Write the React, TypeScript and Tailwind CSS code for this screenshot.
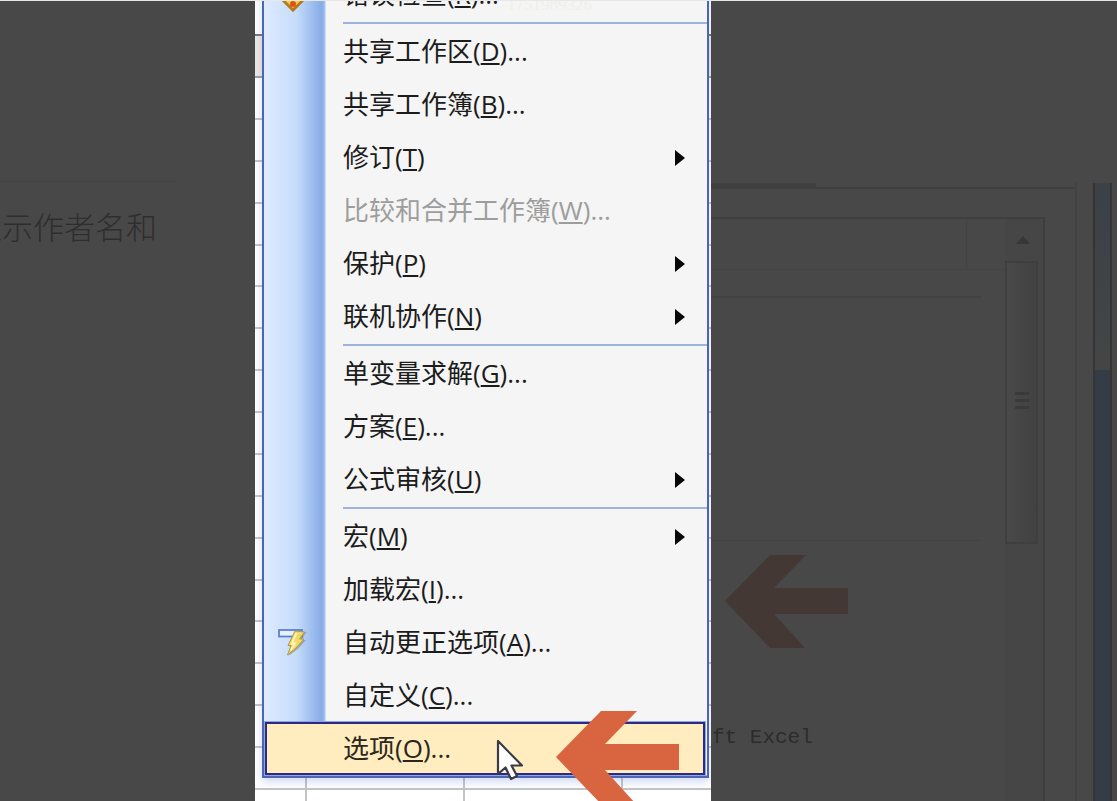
import React from "react";

type Item = {
  label: string;
  hotkey: string;
  ellipsis?: boolean;
  submenu?: boolean;
  disabled?: boolean;
  selected?: boolean;
  icon?: React.ReactNode;
  note?: string;
};

function ShieldIcon() {
  return (
    <svg width="30" height="34" viewBox="0 0 30 34" aria-hidden="true">
      <path d="M15 1 L28 15 V20 L15 33 L2 20 V15 Z" fill="#f4d13c" stroke="#b8860b" strokeWidth="1.5" />
      <path d="M3 20 L15 32 L27 20" fill="none" stroke="#b5791c" strokeWidth="2.500" />
      <path d="M13 5 H17 L16.5 21 H13.5 Z" fill="#d8361d" />
      <circle cx="15" cy="26" r="3" fill="#e0501c" />
    </svg>
  );
}

function AutoCorrectIcon() {
  return (
    <svg width="30" height="30" viewBox="0 0 30 30" aria-hidden="true">
      <rect x="1" y="2" width="23" height="6.5" fill="#e6f0ff" stroke="#5a80d4" strokeWidth="1.8" />
      <path d="M18 4 L28.500 4 L23.500 12 H28 L20 21 L10.500 28 L14.500 18.500 H11 Z" fill="#8a7a5a" opacity=".5" />
      <path d="M17 3 L26.500 4 L21.500 11 H26 L18 20 L9.500 27 L13 17.500 H10 Z" fill="#f3da62" stroke="#b09a4a" strokeWidth="1" />
      <path d="M18.500 5 L14 15.500 H17 L13 22" fill="none" stroke="#fff8c0" strokeWidth="1.8" />
    </svg>
  );
}

function ArrowShape({ className }: { className: string }) {
  return (
    <svg width="124" height="93" viewBox="0 0 124 93" className={className} aria-hidden="true">
      <path d="M0 46 L45 0 H81 L49 33 H123 V59 H49 L80 93 H45 Z" fill="currentColor" />
    </svg>
  );
}

const groups: Item[][] = [
  [{ label: "错误检查", hotkey: "R", ellipsis: true, icon: <ShieldIcon />, note: "1751989326" }],
  [
    { label: "共享工作区", hotkey: "D", ellipsis: true },
    { label: "共享工作簿", hotkey: "B", ellipsis: true },
    { label: "修订", hotkey: "T", submenu: true },
    { label: "比较和合并工作簿", hotkey: "W", ellipsis: true, disabled: true },
    { label: "保护", hotkey: "P", submenu: true },
    { label: "联机协作", hotkey: "N", submenu: true },
  ],
  [
    { label: "单变量求解", hotkey: "G", ellipsis: true },
    { label: "方案", hotkey: "E", ellipsis: true },
    { label: "公式审核", hotkey: "U", submenu: true },
  ],
  [
    { label: "宏", hotkey: "M", submenu: true },
    { label: "加载宏", hotkey: "I", ellipsis: true },
    { label: "自动更正选项", hotkey: "A", ellipsis: true, icon: <AutoCorrectIcon /> },
    { label: "自定义", hotkey: "C", ellipsis: true },
    { label: "选项", hotkey: "O", ellipsis: true, selected: true },
  ],
];

function MenuRow({ item }: { item: Item }) {
  return (
    <li className="relative h-[53px]">
      <button
        type="button"
        disabled={item.disabled}
        className={
          "flex h-full w-full items-center whitespace-nowrap pr-[18px] text-left text-[26px] leading-8 " +
          (item.selected
            ? "border-2 border-[#2d2a86] bg-[#ffecbf] text-[#2b2620] outline-1 outline-[#8ea6e2]"
            : item.disabled
              ? "border-x-2 border-transparent text-[#9d9d9d]"
              : "border-x-2 border-transparent text-[#1c1c1c]")
        }
      >
        <span className="flex w-[76px] shrink-0 pl-[11px]">{item.icon}</span>
        <span className="pb-[2px]">
          {item.label}(<u className="underline decoration-2 underline-offset-2">{item.hotkey}</u>){item.ellipsis ? "..." : ""}
        </span>
        {item.note && (
          <span className="ml-2 self-end pb-1 font-['Liberation_Serif',serif] text-[17px] leading-6 text-[#eff0e9]">
            {item.note}
          </span>
        )}
        {item.submenu && (
          <svg width="10" height="16" viewBox="0 0 10 16" className="ml-auto" aria-hidden="true">
            <path d="M0 0 L10 8 L0 16 Z" fill="#080808" />
          </svg>
        )}
      </button>
      {item.selected && (
        <>
          <svg width="28" height="42" viewBox="0 0 28 42" className="absolute left-[231px] top-[17px]" aria-hidden="true">
            <path d="M2 2 V35 L9.500 28.500 L15 40 L21 37 L15.500 26.500 H26 Z" fill="#fff" stroke="#3b3b46" strokeWidth="2.200" strokeLinejoin="round" />
          </svg>
          <ArrowShape className="absolute left-[291px] top-[-11px] text-[#d96440]" />
        </>
      )}
    </li>
  );
}

function Menu() {
  return (
    <nav className="z-10 -mt-[33px] ml-[7px] mr-[2px] self-start border-x-2 border-b-2 border-[#4c66b4] bg-[linear-gradient(90deg,#deeaff_0px,#c6ddfb_32px,#86abe6_58px,#a5c3f2_61px,#f5f5f5_62px)] shadow-[0_4px_8px_rgba(80,110,220,0.25)] [grid-area:1/1]">
      {groups.map((group, i) => (
        <React.Fragment key={i}>
          {i > 0 && (
            <div className="h-1 py-px pl-[79px]">
              <hr className="h-[2px] border-0 bg-[#9db2dc]" />
            </div>
          )}
          <ul className="pl-px pr-[2px]">
            {group.map((item) => (
              <MenuRow key={item.hotkey} item={item} />
            ))}
          </ul>
        </React.Fragment>
      ))}
      <div className="h-px bg-[#8ea6e2]" />
    </nav>
  );
}

function Sheet() {
  return (
    <div className="flex flex-col bg-white [grid-area:1/1]" aria-hidden="true">
      <div className="h-[35px] border-b-2 border-[#77777c]" />
      <div className="h-[42px] border-b-2 border-[#a0a0a0] bg-[#efe7e0]" />
      {Array.from({ length: 18 }, (_, r) => (
        <div
          key={r}
          className={
            "grid grid-cols-[52px_158px_158px_1fr] " +
            (r < 17 ? "flex-1 border-b-2 border-[#c4c4c6]" : "h-[11px]")
          }
        >
          <span className="border-r-2 border-[#c4c4c6]" />
          <span className="border-r-2 border-[#c4c4c6]" />
          <span className="border-r-2 border-[#c4c4c6]" />
          <span />
        </div>
      ))}
    </div>
  );
}

function LeftPane() {
  return (
    <section className="w-[255px] shrink-0 overflow-hidden pt-[180px]">
      <div className="mr-[79px] h-px bg-[#434343]" />
      <p className="mr-[98px] mt-[22px] flex justify-end whitespace-nowrap text-[31px] font-light leading-[46px] text-[#2e2e2e]">
        显示作者名和
      </p>
    </section>
  );
}

function RightPane() {
  return (
    <section className="flex min-w-0 flex-1 pt-[182px]">
      <div className="flex min-w-0 flex-1 flex-col border-r-2 border-[#424242]">
        <div className="h-1 w-[105px] bg-[#404040]" />
        <div className="border-t-2 border-[#404040]" />
        <div className="mr-[30px] mt-[28px] flex flex-1 border-r-2 border-t-2 border-[#3e3e3e]">
          <div className="flex min-w-0 flex-1 flex-col">
            <div className="flex h-[51px] border-b border-[#444444]">
              <div className="flex-1 border-r border-[#434343]" />
              <div className="w-[38px]" />
            </div>
            <div className="mr-[24px] mt-[26px] border-t-2 border-[#424242]" />
            <div className="mr-[24px] mt-[242px] border-t border-[#434343]" />
            <ArrowShape className="ml-[14px] mt-[14px] shrink-0 text-[#443835]" />
            <p className="mt-[76px] whitespace-pre pl-px font-['Liberation_Mono',monospace] text-[21px] leading-7 text-[#2c2c2c]">
              ft Excel
            </p>
          </div>
          <div className="w-[38px] bg-[#464646]">
            <svg width="14" height="8" viewBox="0 0 14 8" className="ml-[11px] mt-[17px]" aria-hidden="true">
              <path d="M0 8 L7 0 L14 8 Z" fill="#373737" />
            </svg>
            <div className="mt-[17px] flex h-[283px] w-[33px] flex-col items-center justify-center gap-[4px] border-2 border-[#3f3f3f] bg-linear-to-r from-[#494949] to-[#424242] pb-[4px]">
              <span className="h-[3px] w-[14px] bg-[#3a3a3a]" />
              <span className="h-[3px] w-[14px] bg-[#3a3a3a]" />
              <span className="h-[3px] w-[14px] bg-[#3a3a3a]" />
            </div>
          </div>
        </div>
      </div>
      <div className="ml-[16px] mr-[5px] flex w-[19px] flex-col border-x-2 border-[#353535]">
        <div className="h-[187px] bg-linear-to-b from-[#3b4147] to-[#454545]" />
        <div className="flex-1 bg-[#343c45]" />
      </div>
    </section>
  );
}

export default function App() {
  return (
    <main className="flex h-screen overflow-hidden border-t border-[#e8e8e8] bg-[#484848] font-['Open_Sans','Noto_Sans_CJK_SC',sans-serif]">
      <LeftPane />
      <div className="grid w-[456px] shrink-0 grid-cols-1 grid-rows-1 overflow-hidden">
        <Sheet />
        <Menu />
      </div>
      <RightPane />
    </main>
  );
}
